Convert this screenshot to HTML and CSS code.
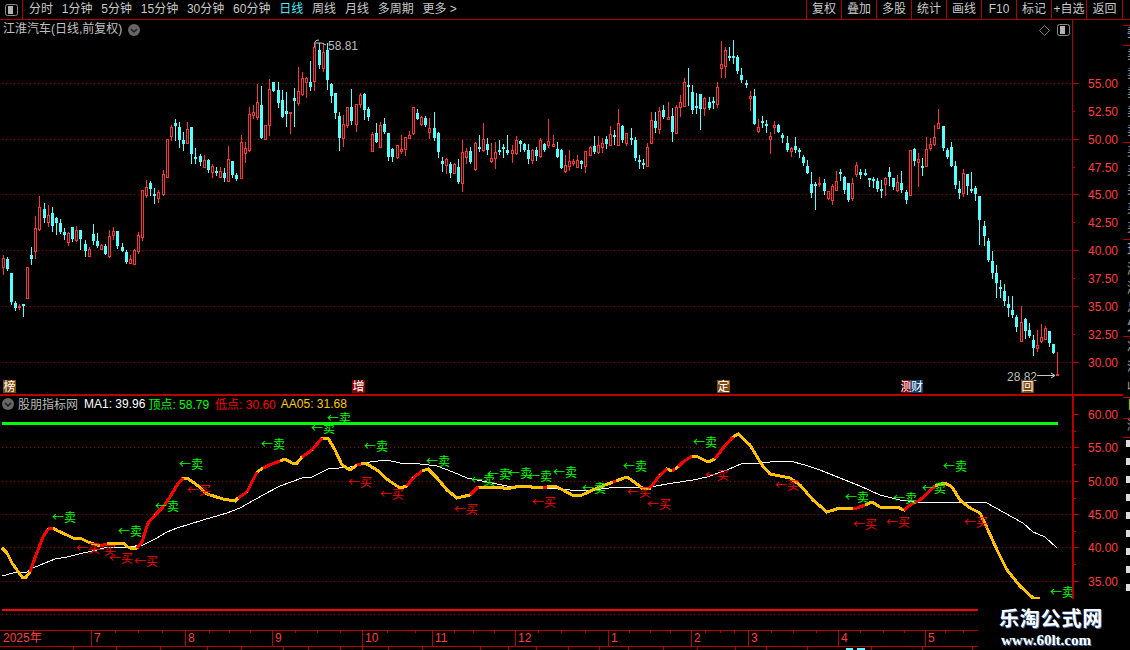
FILE: index.html
```html
<!DOCTYPE html>
<html lang="zh-CN">
<head>
  <meta charset="UTF-8" />
  <meta name="viewport" content="width=device-width, initial-scale=1.0" />
  <title>江淮汽车 - 日线</title>
  <link rel="stylesheet" href="styles.css">
</head>
<body>
  <!-- Top toolbar -->
  <div class="toolbar">
    <div class="panel-toggle">
      <svg class="toggle-icon" width="13" height="12" viewBox="0 0 13 12">
        <rect x="0.5" y="0.5" width="12" height="11" rx="2" class="toggle-frame" />
        <rect x="3" y="2" width="5" height="8" class="toggle-fill" />
      </svg>
    </div>
    <div class="period-tabs">
      <span>分时</span>
      <span>1分钟</span>
      <span>5分钟</span>
      <span>15分钟</span>
      <span>30分钟</span>
      <span>60分钟</span>
      <span class="active-tab">日线</span>
      <span>周线</span>
      <span>月线</span>
      <span>多周期</span>
      <span>更多 &gt;</span>
    </div>
    <div class="tool-buttons">
      <span>复权</span>
      <span>叠加</span>
      <span>多股</span>
      <span>统计</span>
      <span>画线</span>
      <span>F10</span>
      <span>标记</span>
      <span>+自选</span>
      <span class="back-button">返回</span>
    </div>
  </div>

  <div class="workspace">
    <div class="panes">
      <!-- Price chart -->
      <div class="pane pane-main">
        <svg id="mainChart" class="chart" width="1123" height="375" viewBox="0 20 1123 375"></svg>
        <div class="pane-title">
          <span>江淮汽车(日线,前复权)</span>
          <svg width="12" height="12" viewBox="0 0 12 12">
            <circle cx="6" cy="6" r="6" class="circle-bg" />
            <path d="M3 5 L6 8 L9 5" class="circle-mark" />
          </svg>
        </div>
        <div class="pane-icons">
          <svg width="11" height="11" viewBox="0 0 11 11">
            <path d="M5.5 0.5 L10.5 5.5 L5.5 10.5 L0.5 5.5 Z" class="diamond" />
          </svg>
          <svg width="13" height="12" viewBox="0 0 13 12">
            <rect x="0.5" y="0.5" width="12" height="11" rx="2" class="toggle-frame" />
            <rect x="3" y="2" width="5" height="8" class="toggle-fill" />
          </svg>
        </div>
      </div>

      <!-- Indicator chart with the time axis under it -->
      <div class="pane pane-sub">
        <svg id="subChart" class="chart" width="1123" height="255" viewBox="0 395 1123 255"></svg>
        <div class="indicator-legend">
          <svg width="12" height="12" viewBox="0 0 12 12">
            <circle cx="6" cy="6" r="6" class="circle-bg" />
            <path d="M3 5 L6 8 L9 5" class="circle-mark" />
          </svg>
          <span class="legend-name">股朋指标网</span>
          <span class="legend-ma">MA1: 39.96</span>
          <span class="legend-top">顶点: 58.79</span>
          <span class="legend-low">低点: 30.60</span>
          <span class="legend-aa">AA05: 31.68</span>
        </div>
      </div>
    </div>

    <!-- Quote panel, only its left edge is inside the window -->
    <div class="side">
      <div class="side-row row-a"></div>
      <div class="side-row row-b">委比委差</div>
      <div class="side-row row-c">卖五<br>卖四<br>卖三<br>卖二<br>卖一</div>
      <div class="side-row row-c">买一<br>买二<br>买三<br>买四<br>买五</div>
      <div class="side-row row-c row-big">现价<br>涨跌<br>涨幅<br>总量<br>外盘</div>
      <div class="side-row row-d">净资<br>流通<br>收益</div>
      <div class="side-row row-e">日</div>
      <div class="side-row row-f">涨</div>
      <div class="side-row side-blocks"></div>
    </div>
  </div>

  <!-- Watermark over the bottom right corner -->
  <div class="watermark">
    <div class="watermark-name">乐淘公式网</div>
    <div class="watermark-url">www.60lt.com</div>
  </div>

  <script src="script.js"></script>
</body>
</html>
```

FILE: styles.css
```css
* {
  box-sizing: border-box;
}

html, body {
  margin: 0;
  padding: 0;
  height: 100vh;
  overflow: hidden;
}

body {
  background: #000000;
  color: #c8c8c8;
  font-family: "Liberation Sans", "Noto Sans CJK SC", sans-serif;
  font-size: 12px;
}

/* Top toolbar */
.toolbar {
  display: flex;
  align-items: stretch;
  height: 20px;
  padding-right: 7px;
  border-bottom: 1px solid #b00000;
  line-height: 18px;
}

.panel-toggle {
  display: flex;
  align-items: center;
  justify-content: center;
  width: 23px;
  border-right: 1px solid #b00000;
}

.toggle-frame {
  fill: none;
  stroke: #8a8a8a;
}

.toggle-fill {
  fill: #b4b4b4;
}

.period-tabs {
  display: flex;
  gap: 8.8px;
  padding-left: 6px;
  flex: 1;
}

.active-tab {
  color: #4fe8ff;
}

.tool-buttons {
  display: flex;
}

.tool-buttons span {
  width: 35px;
  text-align: center;
  border-left: 1px solid #b00000;
}

.tool-buttons .back-button {
  width: 37px;
  border-right: 1px solid #b00000;
}

/* Chart panes */
.workspace {
  display: flex;
  height: 630px;
}

.panes {
  width: 1123px;
}

.pane {
  position: relative;
}

.pane-main {
  height: 375px;
}

.pane-sub {
  height: 255px;
}

.chart {
  display: block;
  font-family: "Liberation Sans", "Noto Sans CJK SC", sans-serif;
  font-size: 12px;
}

.pane-title {
  position: absolute;
  top: 2px;
  left: 3px;
  display: flex;
  align-items: center;
  gap: 6px;
  line-height: 15px;
  color: #c0c0c0;
}

.circle-bg {
  fill: #666666;
}

.circle-mark {
  fill: none;
  stroke: #1c1c1c;
  stroke-width: 1.5;
}

.pane-icons {
  position: absolute;
  top: 4px;
  left: 1039px;
  display: flex;
  align-items: center;
  gap: 7px;
}

.diamond {
  fill: none;
  stroke: #777777;
}

.indicator-legend {
  position: absolute;
  top: 0;
  left: 2px;
  display: flex;
  align-items: center;
  height: 17px;
  gap: 6px;
}

.legend-name {
  margin-left: -2px;
  color: #b8b8b8;
}

.legend-ma {
  color: #ffffff;
}

.legend-top {
  margin-left: -3px;
  color: #00ff00;
}

.legend-low {
  color: #ff0000;
}

.legend-aa {
  margin-left: -1px;
  color: #ffc800;
}

/* Chart strokes */
.crisp {
  shape-rendering: crispEdges;
}

.grid {
  stroke: #a00000;
  stroke-width: 1;
  stroke-dasharray: 1 3;
}

.axis-line {
  stroke: #b80000;
  stroke-width: 1;
}

.axis-thick {
  stroke: #b80000;
  stroke-width: 2;
}

.axis-label {
  fill: #ff3c3c;
}

.wick-up {
  stroke: #ff3232;
}

.wick-down {
  stroke: #54ffff;
}

.body-up {
  fill: #000000;
  stroke: #ff3232;
}

.body-down {
  fill: #54ffff;
}

.mark-text {
  fill: #bdbdbd;
}

.mark-line {
  fill: none;
  stroke: #c8c8c8;
}

.chip-text {
  fill: #ffffff;
  font-family: "Noto Sans CJK SC", sans-serif;
  text-anchor: middle;
}

.line-ma {
  fill: none;
  stroke: #ffffff;
  stroke-width: 1;
}

.line-aa {
  fill: none;
  stroke: #ffc000;
  stroke-width: 3;
}

.line-aa-red {
  fill: none;
  stroke: #ff0000;
  stroke-width: 3;
}

.line-top {
  stroke: #00ff00;
  stroke-width: 3;
}

.line-low {
  stroke: #ff0000;
  stroke-width: 2;
}

.signal {
  font-family: "Noto Sans CJK SC", sans-serif;
}

.signal-sell {
  fill: #00ff00;
}

.signal-buy {
  fill: #ff0000;
}

.strip-bit {
  fill: #54ffff;
}

/* Quote panel */
.side {
  flex: 1;
  display: flex;
  flex-direction: column;
  overflow: hidden;
  height: 578px;
  white-space: nowrap;
  border-left: 0;
}

.side-row {
  padding-left: 4px;
  overflow: hidden;
  line-height: 14px;
  color: #a8a8a8;
  border-bottom: 1px solid #b00000;
}

.row-a {
  height: 6px;
}

.row-b {
  height: 20px;
}

.row-c {
  height: 97px;
  line-height: 19px;
}

.row-big {
  font-size: 14px;
}

.row-d {
  height: 61px;
  line-height: 20px;
}

.row-e {
  height: 21px;
  color: #e0e000;
}

.row-f {
  height: 19px;
}

.side-blocks {
  flex: 1;
  margin-left: 3px;
  padding: 0;
  border: none;
  background: repeating-linear-gradient(#000000 0 2px, #dcdcdc 2px 9px, #000000 9px 18px);
}

/* Watermark */
.watermark {
  position: absolute;
  top: 599px;
  left: 978px;
  width: 152px;
  height: 51px;
  background: #000000;
  padding: 7px 0 0 21px;
  color: #ffffff;
  text-shadow: 1px 1px 0 #3f6fb0;
}

.watermark-name {
  font-family: "Noto Sans CJK SC", sans-serif;
  font-size: 20px;
  font-weight: bold;
  line-height: 24px;
  letter-spacing: 0.8px;
}

.watermark-url {
  font-family: "Liberation Serif", serif;
  font-size: 15px;
  font-weight: bold;
  line-height: 20px;
  margin-left: 2px;
}
```

FILE: script.js
```js
// Daily candles: [isUp, bodyTop, bodyBottom, high, low], all in page pixels.
const candles = [
  [1,258,267,255,274],[0,259,269,257,270],[0,273,302,273,304],[0,303,308,301,310],[1,306,307,304,309],
  [0,304,306,304,316],[1,267,298,267,298],[0,255,259,247,264],[1,228,251,216,258],[1,207,229,196,230],
  [0,209,218,203,222],[1,215,222,205,226],[0,213,226,207,231],[0,218,223,217,234],[0,223,232,219,233],
  [0,232,235,228,239],[1,233,242,232,245],[0,227,239,227,241],[1,230,240,226,241],[0,230,239,230,249],
  [0,244,251,240,256],[1,249,256,247,256],[0,234,241,224,244],[0,241,246,233,247],[1,245,249,244,249],
  [0,246,254,244,254],[1,236,256,230,257],[1,231,235,227,239],[0,231,246,231,248],[0,247,251,243,251],
  [0,252,262,250,263],[1,259,263,255,263],[1,250,264,249,264],[1,235,251,232,253],[1,190,237,190,240],
  [1,187,195,180,197],[0,183,189,181,195],[0,194,196,188,203],[1,192,198,190,202],[1,174,194,170,195],
  [1,139,177,139,177],[1,127,136,125,140],[0,123,126,119,140],[0,127,140,122,147],[0,140,144,132,150],
  [1,129,143,122,143],[0,127,154,127,163],[0,157,158,148,163],[0,156,162,154,165],[1,160,167,155,167],
  [0,160,170,159,172],[1,166,172,164,177],[0,171,172,167,175],[1,171,177,167,177],[0,173,178,168,181],
  [1,159,181,146,181],[0,161,175,161,177],[0,175,179,173,180],[1,142,178,135,178],[1,148,153,142,162],
  [1,114,150,107,151],[1,112,115,105,118],[1,102,117,84,119],[0,105,138,86,138],[1,125,139,125,139],
  [1,89,125,79,135],[0,82,91,82,91],[0,90,103,82,107],[0,100,117,90,117],[0,111,114,92,126],
  [1,112,113,112,133],[0,98,101,88,126],[1,91,103,67,105],[1,78,94,72,95],[1,78,82,77,97],
  [0,82,87,61,90],[1,47,81,42,90],[0,50,65,43,68],[1,52,68,43,71],[0,50,80,43,89],
  [0,84,96,83,102],[0,93,113,93,118],[0,116,138,112,150],[1,124,138,115,146],[1,107,125,107,127],
  [0,107,121,89,124],[1,104,124,104,131],[1,95,104,93,107],[0,94,110,93,119],[0,109,117,107,120],
  [1,134,151,132,151],[0,133,142,123,142],[1,125,147,122,147],[0,124,132,118,133],[0,133,157,133,160],
  [0,149,157,148,161],[1,145,157,145,158],[1,149,151,135,153],[1,137,149,137,155],[1,135,138,131,138],
  [1,107,133,107,134],[0,113,119,109,119],[1,117,124,116,125],[0,118,125,116,126],[1,128,132,118,138],
  [0,128,138,112,140],[0,133,152,132,157],[0,161,164,157,171],[1,159,165,158,173],[0,164,173,162,177],
  [1,164,173,163,173],[0,167,182,159,183],[1,152,183,140,191],[1,151,157,148,163],[0,151,162,147,163],
  [1,143,169,142,170],[0,147,148,135,151],[1,139,150,123,151],[0,144,150,138,154],[1,158,161,143,162],
  [1,152,158,142,168],[0,150,151,140,154],[0,147,149,144,157],[0,150,153,135,154],[1,150,153,145,162],
  [1,140,153,136,154],[0,141,144,140,151],[0,144,150,143,151],[0,150,159,144,163],[1,150,160,149,163],
  [0,150,156,147,160],[1,140,156,138,157],[0,144,150,143,151],[1,141,145,119,147],[1,144,146,135,146],
  [0,149,157,142,157],[0,150,168,149,168],[1,165,171,155,172],[1,161,166,150,170],[1,161,163,159,165],
  [1,160,167,155,167],[0,161,164,160,168],[1,151,166,151,172],[1,147,155,146,155],[0,146,152,136,153],
  [1,145,152,136,153],[1,143,147,138,152],[0,139,144,136,148],[1,134,145,126,145],[0,135,136,130,144],
  [1,123,145,109,145],[0,126,140,125,142],[1,133,143,133,145],[0,138,140,128,144],[0,140,158,137,160],
  [0,160,162,155,168],[0,163,165,159,168],[1,147,166,143,166],[1,120,143,112,143],[0,121,128,112,132],
  [1,111,129,107,133],[0,110,117,105,118],[1,117,119,102,119],[0,116,132,108,141],[1,107,133,105,133],
  [1,102,107,95,116],[1,82,106,78,106],[0,85,86,68,105],[0,92,110,85,113],[0,106,107,93,113],
  [0,94,109,94,129],[1,98,108,97,115],[0,102,108,97,109],[0,101,102,97,108],[1,87,104,82,107],
  [1,64,68,41,77],[1,50,66,47,77],[0,56,58,47,60],[0,56,58,40,63],[0,57,71,55,73],
  [0,75,80,68,82],[0,83,85,80,87],[1,96,98,91,110],[0,96,124,89,124],[1,127,131,119,132],
  [0,121,123,116,127],[0,124,125,120,132],[1,136,139,132,153],[1,125,127,121,133],[0,125,132,124,132],
  [0,135,138,133,142],[0,143,150,136,151],[1,148,151,147,156],[0,146,150,137,152],[0,150,152,148,157],
  [0,157,163,155,165],[0,166,173,160,173],[0,184,193,172,197],[0,184,185,182,209],[1,183,184,177,186],
  [0,183,191,179,194],[1,191,198,191,199],[1,186,200,184,204],[1,181,190,171,190],[0,172,174,169,180],
  [0,177,190,176,193],[0,183,200,183,201],[1,183,198,178,200],[1,165,174,162,176],[0,172,175,169,178],
  [0,173,175,169,175],[0,178,180,178,186],[0,179,181,177,187],[0,181,189,178,191],[0,189,190,180,197],
  [1,178,184,177,195],[0,172,177,167,185],[0,178,187,178,189],[1,182,190,175,191],[0,183,190,171,192],
  [0,192,200,190,203],[1,150,195,150,195],[0,149,161,148,165],[1,159,162,153,186],[0,166,168,158,175],
  [1,149,166,137,166],[1,144,148,138,150],[1,137,144,125,145],[1,123,128,109,128],[0,126,148,126,150],
  [0,150,157,148,158],[0,147,166,142,166],[0,166,185,161,188],[0,189,193,181,198],[1,173,193,169,196],
  [0,174,186,174,194],[0,189,190,172,192],[0,188,194,186,200],[0,196,220,196,244],[0,226,236,221,245],
  [0,241,260,238,261],[0,261,273,251,278],[0,273,283,265,297],[0,287,289,280,297],[0,291,301,284,305],
  [0,304,308,296,316],[0,310,315,296,317],[0,317,327,315,331],[1,322,341,306,341],[0,319,331,318,338],
  [0,330,336,323,337],[0,340,348,335,355],[1,345,348,330,351],[1,337,341,324,342],[1,328,339,326,339],
  [0,331,343,331,346],[0,344,353,344,353],[1,374,375,352,375]
];

// AA05 curve: [x, y, red]; red marks the stretch that ends at this point.
const aaLine = [
  [2,548],[7,553],[12,563],[17,570],[22,577],[26,577],[30,572],[33,563,1],[38,550,1],[43,537,1],[48,529,1],[53,528,1],
  [58,531],[67,535],[73,538],[80,538],[88,542],[100,546],[107,544,1],[112,543],[123,543],[128,547],[133,549],[137,548],
  [142,542,1],[148,523,1],[155,515,1],[163,507,1],[170,497,1],[177,485,1],[183,478,1],[187,478],[197,485],[207,494],[223,499],[235,501],
  [238,498],[247,492,1],[257,472,1],[263,468],[272,464,1],[280,461,1],[285,459],[292,463],[297,463],[302,457],[312,450,1],[322,438,1],
  [328,438],[335,450],[342,465],[350,470],[357,465],[361,464,1],[365,463],[377,470],[388,480],[400,488],[407,486],
  [413,478,1],[422,471,1],[428,469],[437,478],[447,490],[457,498],[470,495],[478,487,1],[483,487],[500,487],[507,489],[520,486],
  [543,488],[547,487,1],[555,486],[563,490],[572,495],[582,495],[597,488],[613,482],[616,481,1],[627,477],[633,481],[642,488],[650,488],
  [660,475,1],[667,469,1],[672,471],[675,469,1],[678,467],[683,462,1],[692,456,1],[698,457],[708,462],[715,459],
  [723,448,1],[733,437,1],[738,434],[750,445],[762,465],[770,474],[780,476],[790,478],[800,485],[813,500],[827,512],[840,508],[853,509],
  [857,508,1],[865,505,1],[872,502],[880,507],[897,507],[904,510],[910,505,1],[920,500,1],[935,486,1],[945,483],[952,487],[960,500],
  [970,508],[980,513],[988,530],[997,550],[1007,570],[1020,586],[1033,598],[1040,599]
];

const maLine = [
  [2,576],[13,573],[27,572],[33,568],[45,563],[55,559],[67,557],[83,553],[97,550],[107,547],[128,547],[143,545],[155,539],
  [167,532],[177,528],[190,524],[203,520],[227,513],[240,508],[263,495],[280,486],[302,478],[312,477],[328,469],[350,467],
  [370,462],[387,460],[400,463],[420,464],[437,466],[453,472],[467,478],[487,482],[507,486],[533,487],[570,490],[593,490],
  [617,487],[650,487],[673,483],[693,480],[707,477],[727,470],[743,463],[760,463],[780,461],[790,461],[805,465],[820,470],
  [840,478],[860,486],[880,495],[900,500],[923,503],[947,502],[977,502],[987,503],[1003,512],[1023,523],[1033,532],[1045,537],[1057,548]
];

// Signals: [left x, centre y]
const sellSignals = [
  [52,517],[118,531],[155,506],[179,464],[261,444],[311,428],[327,418],[364,446],[426,461],[471,480],[487,474],[508,473],
  [528,476],[553,472],[582,488],[623,466],[693,442],[845,497],[893,498],[922,488],[943,466],[1050,592]
];
const buySignals = [
  [76,548],[92,550],[109,558],[134,561],[187,490],[348,482],[380,494],[454,509],[532,502],[627,492],[647,504],
  [705,475],[775,485],[853,524],[886,522],[964,522]
];

// Price chart: y of every 2.5 step, starting at 55.00.
const priceLabels = [
  ['55.00',83.5],['52.50',111.5],['50.00',139.5],['47.50',167],['45.00',194.5],['42.50',222.5],
  ['40.00',250.5],['37.50',278.5],['35.00',306],['32.50',334],['30.00',362]
];
const indicatorLabels = [
  ['60.00',414],['55.00',447.5],['50.00',481],['45.00',514.5],['40.00',547.5],['35.00',581]
];

const chips = [
  [3,13,'#7c4a10','榜'],[352,13,'#8a0000','增'],[717,13,'#7c4a10','定'],
  [902,9,'#8a0000','测'],[911,12,'#0a3c6e','财'],[1021,13,'#7c4a10','回']
];

const months = [
  [0,'2025年'],[91,'7'],[185,'8'],[272,'9'],[362,'10'],[432,'11'],[515,'12'],
  [608,'1'],[691,'2'],[748,'3'],[838,'4'],[925,'5']
];
const minorTicks = [
  115,138,162,209,229,250,295,317,340,387,415,454,473,494,538,561,585,629,650,670,705,720,734,771,793,816,860,883,904,945,963
];
const stripTicks = [
  73,116,160,207,241,283,308,340,362,388,422,480,508,536,568,599,628,663,697,735,766,807,871,922,972
];

const pixel = (v) => Math.floor(v) + 0.5;

function hLine(x1, x2, y, cls) {
  return `<line x1="${x1}" x2="${x2}" y1="${y}" y2="${y}" class="crisp ${cls}" />`;
}

function vLine(x, y1, y2, cls) {
  return `<line x1="${x}" x2="${x}" y1="${y1}" y2="${y2}" class="crisp ${cls}" />`;
}

// Dots stay one pixel wide only without crispEdges.
function gridLine(y) {
  return `<line x1="2" x2="1072" y1="${pixel(y)}" y2="${pixel(y)}" class="grid" />`;
}

function drawCandle(candle, i) {
  const [up, top, bottom, high, low] = candle;
  const x = Math.round(2.5 + 4.105 * i);
  const wick = vLine(x + 0.5, high, low + 1, up ? 'wick-up' : 'wick-down');
  if (up) {
    return `${wick}<rect x="${x - 0.5}" y="${top + 0.5}" width="2" height="${Math.max(bottom - top, 1)}" class="crisp body-up" />`;
  }
  return `${wick}<rect x="${x - 1}" y="${top}" width="3" height="${Math.max(bottom - top, 2)}" class="crisp body-down" />`;
}

function drawAxis(labels, axisClass) {
  return labels.map(([text, y]) => {
    const major = text.endsWith('0.00') || text.endsWith('5.00');
    const tick = hLine(1072, major ? 1079 : 1075, pixel(y), 'axis-line');
    return `${tick}<text x="1088" y="${y + 4.5}" class="axis-label">${text}</text>`;
  }).join('') + axisClass;
}

function toPoints(list) {
  return list.map(p => `${p[0]},${p[1]}`).join(' ');
}

// Split the curve into yellow and red stretches.
function drawAaLine() {
  let out = `<polyline points="${toPoints(aaLine)}" class="crisp line-aa" />`;
  for (let i = 1; i < aaLine.length; i++) {
    if (aaLine[i][2]) {
      out += `<polyline points="${toPoints([aaLine[i - 1], aaLine[i]])}" class="crisp line-aa-red" />`;
    }
  }
  return out;
}

function drawSignals(list, text, cls) {
  return list.map(([x, y]) => `<text x="${x}" y="${y + 5}" class="signal ${cls}">←${text}</text>`).join('');
}

// Price pane
let main = '';
[83.5, 139.5, 194.5, 250.5, 306, 362].forEach(y => {
  main += gridLine(y);
});
main += candles.map(drawCandle).join('');
main += drawAxis(priceLabels, vLine(1072.5, 20, 394, 'axis-line'));
main += `<path d="M315 47 V42 Q315 40 319 40 M316 43 H322 L326 45" class="mark-line" />`;
main += `<text x="328" y="50" class="mark-text">58.81</text>`;
main += `<text x="1007" y="381" class="mark-text">28.82</text>`;
main += `<path d="M1037 375.5 H1055 M1051 373 L1055 375.5 L1051 378" class="mark-line" />`;
chips.forEach(([x, w, color, text]) => {
  main += `<rect x="${x}" y="380" width="${w}" height="13" fill="${color}" />`;
  main += `<text x="${x + w / 2}" y="391" class="chip-text">${text}</text>`;
});
main += hLine(0, 1123, 394.5, 'axis-line');
document.getElementById('mainChart').innerHTML = main;

// Indicator pane
let sub = hLine(0, 1123, 395.5, 'axis-line');
[447.5, 481, 514.5, 547.5, 581, 614.5].forEach(y => {
  sub += gridLine(y);
});
sub += hLine(2, 1058, 423, 'line-top');
sub += hLine(2, 978, 610, 'line-low');
sub += `<polyline points="${toPoints(maLine)}" class="crisp line-ma" />`;
sub += drawAaLine();
sub += drawSignals(sellSignals, '卖', 'signal-sell');
sub += drawSignals(buySignals, '买', 'signal-buy');
sub += `<line x1="1073" x2="1073" y1="395" y2="600" class="crisp axis-thick" />`;
sub += drawAxis(indicatorLabels, '');
[431.5, 464, 498, 531, 564].forEach(y => {
  sub += hLine(1073, 1076, pixel(y), 'axis-line');
});

// Time axis
sub += hLine(0, 978, 630.5, 'axis-line');
sub += hLine(0, 978, 646.5, 'axis-line');
months.forEach(([x, text]) => {
  if (x > 0) sub += vLine(x + 0.5, 630, 646, 'axis-line');
  sub += `<text x="${x + 3}" y="642" class="axis-label">${text}</text>`;
});
minorTicks.forEach(x => {
  sub += vLine(x + 0.5, 630, 633, 'axis-line');
});
stripTicks.forEach(x => {
  sub += vLine(x + 0.5, 646, 650, 'axis-line');
});
sub += `<rect x="846" y="648" width="7" height="2" class="strip-bit" />`;
sub += `<rect x="857" y="648" width="8" height="2" class="strip-bit" />`;
document.getElementById('subChart').innerHTML = sub;
```
